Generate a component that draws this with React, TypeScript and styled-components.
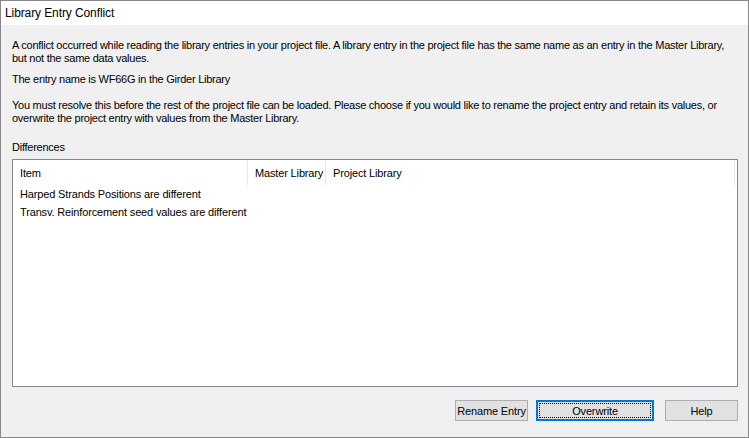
import React from "react";
import styled, { createGlobalStyle } from "styled-components";

const Global = createGlobalStyle`
  html, body { margin: 0; padding: 0; background: #f0f0f0; }
  body { font-family: "Liberation Sans", Arial, sans-serif; }
`;

const Window = styled.div`
  width: 749px;
  height: 438px;
  box-sizing: border-box;
  border: 1px solid #888888;
  background: #f0f0f0;
  display: flex;
  flex-direction: column;
`;

const TitleBar = styled.div`
  height: 24px;
  background: #ffffff;
  display: flex;
  align-items: center;
  padding-left: 4px;
  font-family: "Liberation Sans", Arial, sans-serif;
  font-size: 12px;
  letter-spacing: -0.1px;
  color: #000;
`;

const Body = styled.div`
  flex: 1;
  display: flex;
  flex-direction: column;
  padding: 14px 10px 0 11px;
  font-size: 11px;
  color: #000;
`;

const Para = styled.p<{ $mb: number }>`
  margin: 0 0 ${(p) => p.$mb}px 0;
  line-height: 13px;
  letter-spacing: -0.25px;
`;

const ListBox = styled.div`
  margin-top: 5px;
  height: 226px;
  border: 1px solid #828790;
  background: #fff;
  display: flex;
  flex-direction: column;
  letter-spacing: -0.15px;
`;

const Header = styled.div`
  display: grid;
  grid-template-columns: 235px 78px 1fr 3px;
  height: 25px;
`;

const HeaderCell = styled.div<{ $last?: boolean }>`
  display: flex;
  align-items: center;
  padding-left: 7px;
  white-space: nowrap;
  overflow: hidden;
  border-right: ${(p) => (p.$last ? "none" : "1px solid #e5e5e5")};
`;

const HeaderEnd = styled.div`
  border-left: 1px solid #e5e5e5;
`;

const Row = styled.div`
  height: 18px;
  display: flex;
  align-items: center;
  padding-left: 7px;
  white-space: nowrap;
`;

const Buttons = styled.div`
  display: flex;
  justify-content: flex-end;
  margin-top: 13px;
`;

const Button = styled.button<{ $w: number; $ml: number; $default?: boolean }>`
  width: ${(p) => p.$w}px;
  margin-left: ${(p) => p.$ml}px;
  height: 21px;
  box-sizing: border-box;
  font-family: "Liberation Sans", Arial, sans-serif;
  font-size: 11px;
  letter-spacing: -0.15px;
  color: #000;
  background: #e1e1e1;
  border: ${(p) => (p.$default ? "2px solid #0078d7" : "1px solid #adadad")};
  padding: 0;
  position: relative;
  white-space: nowrap;
  ${(p) =>
    p.$default &&
    `&::after { content: ""; position: absolute; inset: 1px; border: 1px dotted #000; }`}
`;

export default function App() {
  return (
    <>
      <Global />
      <Window>
        <TitleBar>Library Entry Conflict</TitleBar>
        <Body>
          <Para $mb={8}>
            A conflict occurred while reading the library entries in your project file. A library entry in the project file has the same name as an entry in the Master Library, but not the same data values.
          </Para>
          <Para $mb={13}>The entry name is WF66G in the Girder Library</Para>
          <Para $mb={16}>
            You must resolve this before the rest of the project file can be loaded. Please choose if you would like to rename the project entry and retain its values, or overwrite the project entry with values from the Master Library.
          </Para>
          <Para $mb={0}>Differences</Para>
          <ListBox>
            <Header>
              <HeaderCell>Item</HeaderCell>
              <HeaderCell>Master Library</HeaderCell>
              <HeaderCell $last>Project Library</HeaderCell>
              <HeaderEnd />
            </Header>
            <Row>Harped Strands Positions are different</Row>
            <Row>Transv. Reinforcement seed values are different</Row>
          </ListBox>
          <Buttons>
            <Button $w={73} $ml={0}>Rename Entry</Button>
            <Button $w={118} $ml={8} $default>Overwrite</Button>
            <Button $w={73} $ml={11}>Help</Button>
          </Buttons>
        </Body>
      </Window>
    </>
  );
}
